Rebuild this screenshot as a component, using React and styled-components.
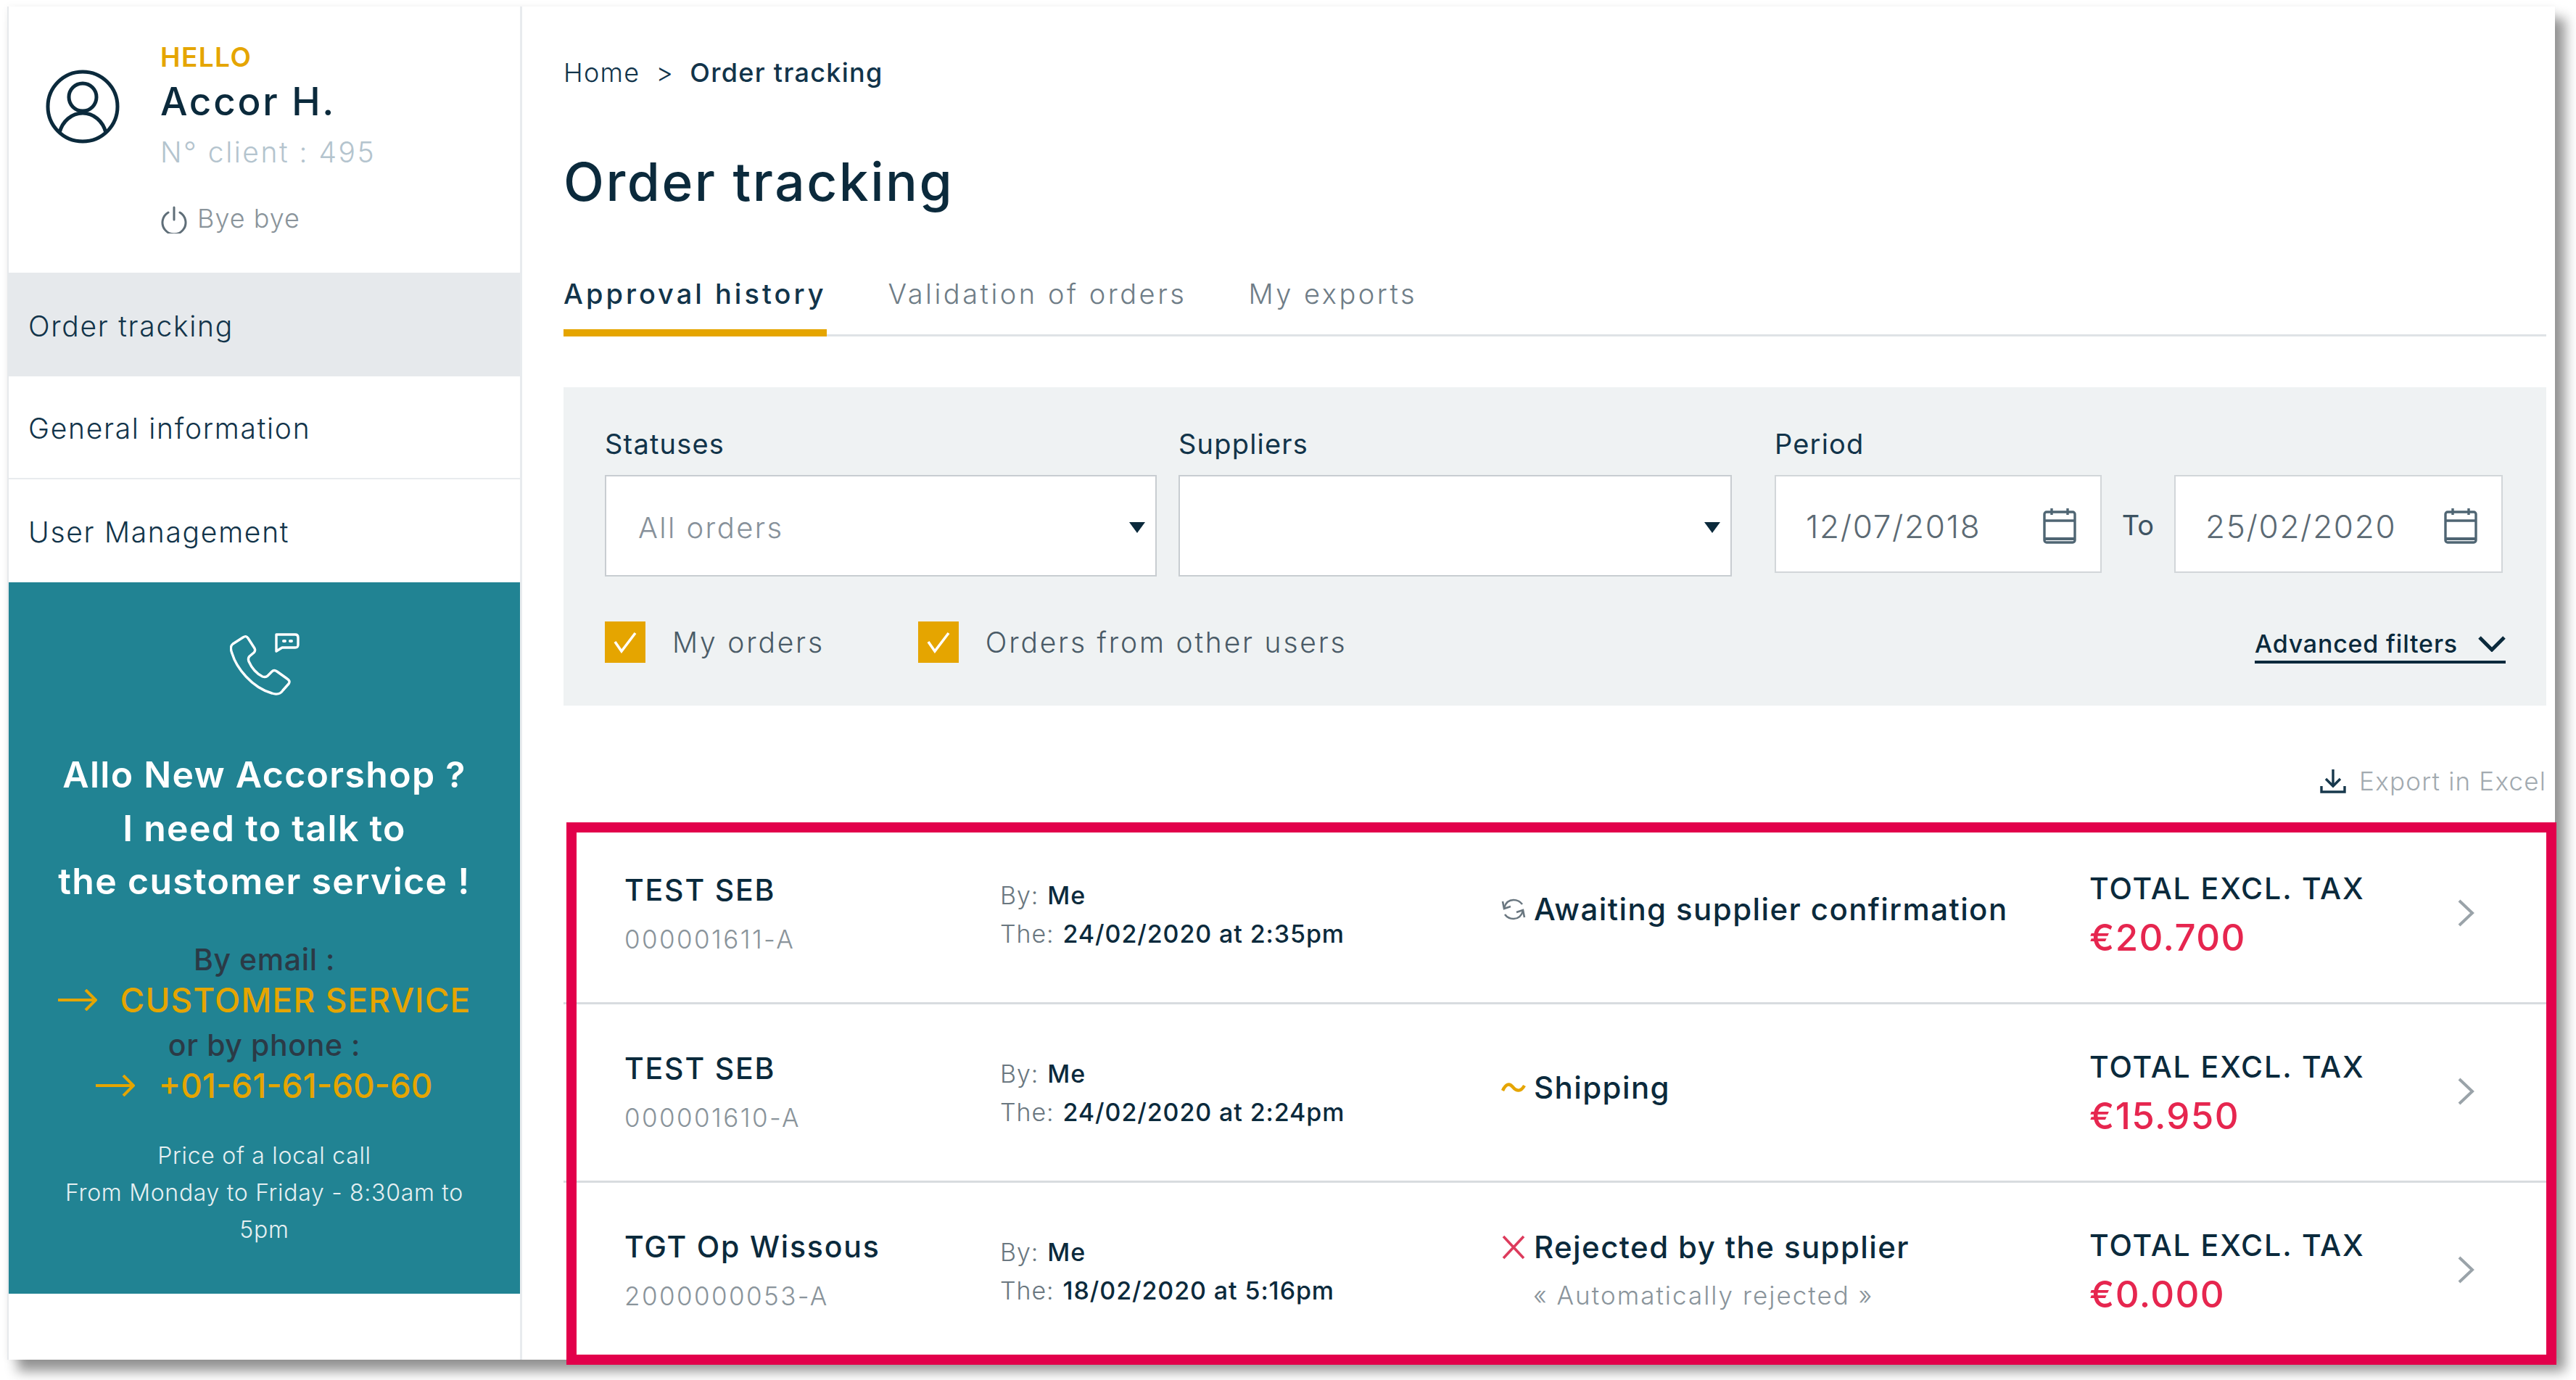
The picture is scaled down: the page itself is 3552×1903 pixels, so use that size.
import styled, { createGlobalStyle } from "styled-components";

const GlobalStyle = createGlobalStyle`
  html, body {
    margin: 0;
    padding: 0;
    background: #ffffff;
  }
  body {
    font-family: "Inter", "Noto Sans", sans-serif;
    color: #0b2a3c;
  }
  * {
    box-sizing: border-box;
  }
`;

const Page = styled.div`
  width: 3552px;
  height: 1903px;
  padding: 9px 0 0 10px;
  overflow: hidden;
`;

const Card = styled.div`
  position: relative;
  width: 3513px;
  height: 1866px;
  display: flex;
  background: #ffffff;
  border-left: 2px solid #e6e9ec;
  box-shadow: 14px 16px 16px rgba(0, 0, 0, 0.42), 0 0 10px rgba(0, 0, 0, 0.05);
`;

const Sidebar = styled.aside`
  width: 708px;
  flex-shrink: 0;
  border-right: 3px solid #e8ebee;
`;

const Profile = styled.div`
  height: 367px;
  display: flex;
  padding: 50px 0 0 51px;
`;

const Avatar = styled.svg`
  width: 102px;
  height: 102px;
  margin-top: 37px;
  flex-shrink: 0;
`;

const ProfileText = styled.div`
  margin-left: 56px;
`;

const Hello = styled.div`
  font-size: 37px;
  line-height: 40px;
  font-weight: 600;
  letter-spacing: 1.4px;
  color: #e5a500;
`;

const UserName = styled.div`
  font-size: 53px;
  line-height: 60px;
  margin-top: 11px;
  font-weight: 500;
  letter-spacing: 2.7px;
`;

const ClientNo = styled.div`
  font-size: 39px;
  line-height: 46px;
  margin-top: 17px;
  font-weight: 300;
  letter-spacing: 2.5px;
  color: #b4c4ce;
`;

const Logout = styled.div`
  display: flex;
  align-items: center;
  gap: 13px;
  margin-top: 46px;
  font-size: 36px;
  line-height: 44px;
  font-weight: 300;
  letter-spacing: 1px;
  color: #8a949b;

  svg {
    margin-top: 4px;
  }
`;

const NavItem = styled.div`
  height: ${(props) => (props.$active ? "143px" : "142px")};
  display: flex;
  align-items: center;
  padding: 3px 0 0 27px;
  font-size: 39px;
  font-weight: 300;
  letter-spacing: 1.7px;
  color: #12344a;
  background: ${(props) => (props.$active ? "#e6e9ec" : "#ffffff")};
  border-bottom: ${(props) => (props.$bordered ? "2px solid #e8ebee" : "none")};
`;

const Contact = styled.div`
  height: 981px;
  background: #218393;
  padding-top: 70px;
  text-align: center;
`;

const ContactIcon = styled.svg`
  display: block;
  width: 96px;
  height: 86px;
  margin: 0 auto;
`;

const ContactTitle = styled.div`
  margin-top: 73px;
  font-size: 50px;
  line-height: 73.5px;
  font-weight: 600;
  letter-spacing: 1.3px;
  color: #ffffff;
`;

const ContactLabel = styled.div`
  font-size: 41px;
  line-height: 56px;
  font-weight: 500;
  letter-spacing: 0.6px;
  color: #2b3a46;
  margin-top: ${(props) => props.$top || 0}px;
`;

const ContactLink = styled.div`
  display: flex;
  align-items: center;
  justify-content: center;
  gap: 32px;
  font-size: 46px;
  line-height: 56px;
  font-weight: 500;
  letter-spacing: ${(props) => props.$spacing || 0}px;
  color: #e5a500;
`;

const ContactNote = styled.div`
  margin-top: 43px;
  font-size: 32px;
  line-height: 51px;
  font-weight: 300;
  letter-spacing: 0.7px;
  color: #e6f0f2;
`;

const Main = styled.main`
  flex: 1;
  padding: 71px 12px 0 57px;
  min-width: 0;
`;

const Crumbs = styled.div`
  display: flex;
  align-items: center;
  height: 40px;
  gap: 22px;
  font-size: 36px;
  font-weight: 300;
  letter-spacing: 1.3px;
  color: #12344a;
`;

const CrumbCurrent = styled.span`
  font-weight: 500;
`;

const Title = styled.h1`
  margin: 86px 0 0 0;
  height: 90px;
  line-height: 90px;
  font-size: 73px;
  font-weight: 500;
  letter-spacing: 2.5px;
  color: #0b2a3c;
`;

const Tabs = styled.div`
  display: flex;
  align-items: flex-start;
  height: 102px;
  margin-top: 66px;
  border-bottom: 3px solid #dfe3e6;
  gap: 85px;
`;

const Tab = styled.div`
  height: 102px;
  padding-top: 21px;
  font-size: 38px;
  line-height: 44px;
  letter-spacing: ${(props) => (props.$active ? 4 : 3.5)}px;
  font-weight: ${(props) => (props.$active ? 500 : 300)};
  color: ${(props) => (props.$active ? "#12344a" : "#6f7d87")};
  border-bottom: ${(props) => (props.$active ? "10px solid #e5a500" : "none")};
`;

const Filters = styled.section`
  height: 439px;
  margin-top: 70px;
  padding: 55px 60px 0 57px;
  background: #eff2f3;
`;

const FilterRow = styled.div`
  display: flex;
  align-items: flex-start;
`;

const Field = styled.div`
  width: ${(props) => props.$width}px;
  margin-right: ${(props) => props.$gap || 0}px;
  flex-shrink: 0;
`;

const FieldLabel = styled.div`
  height: 66px;
  font-size: 38px;
  line-height: 46px;
  font-weight: 400;
  letter-spacing: 1.2px;
  color: #12344a;
`;

const SelectBox = styled.div`
  height: 140px;
  display: flex;
  align-items: center;
  justify-content: space-between;
  padding: 4px 14px 0 44px;
  background: #ffffff;
  border: 2px solid #c8cdd1;
  font-size: 40px;
  font-weight: 300;
  letter-spacing: 2.4px;
  color: #87919a;
`;

const Caret = styled.span`
  width: 0;
  height: 0;
  border-left: 11px solid transparent;
  border-right: 11px solid transparent;
  border-top: 15px solid #0b2a3c;
  margin-left: auto;
`;

const DateGroup = styled.div`
  display: flex;
  align-items: center;
`;

const DateBox = styled.div`
  width: ${(props) => props.$width}px;
  height: 135px;
  display: flex;
  align-items: center;
  justify-content: space-between;
  padding: 4px 33px 0 41px;
  background: #ffffff;
  border: 2px solid #d2d6d9;
  font-size: 44px;
  font-weight: 300;
  letter-spacing: 1.7px;
  color: #5c6a74;
`;

const DateText = styled.span`
  margin-top: 3px;
`;

const ToLabel = styled.div`
  width: 100px;
  text-align: center;
  font-size: 38px;
  font-weight: 400;
  margin-top: 3px;
  color: #3d5362;
`;

const FilterFoot = styled.div`
  display: flex;
  align-items: center;
  margin-top: 62px;
  height: 57px;
`;

const CheckItem = styled.label`
  display: flex;
  align-items: center;
  gap: 37px;
  margin-right: ${(props) => props.$gap || 0}px;
  font-size: 39px;
  font-weight: 300;
  letter-spacing: 2.8px;
  color: #4a5b67;
`;

const CheckBox = styled.span`
  width: 56px;
  height: 57px;
  display: flex;
  align-items: center;
  justify-content: center;
  background: #e5a500;
`;

const AdvancedLink = styled.div`
  display: flex;
  align-items: center;
  justify-content: space-between;
  width: 346px;
  height: 50px;
  margin: 8px 0 0 auto;
  border-bottom: 4px solid #0b2a3c;
  font-size: 34px;
  font-weight: 500;
  letter-spacing: 0.8px;
  color: #0b2a3c;
  position: relative;
  left: 4px;
`;

const ExportRow = styled.div`
  display: flex;
  align-items: center;
  justify-content: flex-end;
  height: 40px;
  margin-top: 84px;
  gap: 18px;
  font-size: 35px;
  font-weight: 300;
  letter-spacing: 1.2px;
  color: #a2aab0;
`;

const OrderList = styled.div`
  margin-top: 42px;
`;

const OrderRow = styled.div`
  display: grid;
  grid-template-columns: 518px 688px 814px 507px 60px;
  align-items: center;
  height: 246px;
  padding: 0 0 4px 84px;
  border-bottom: 3px solid ${(props) => (props.$last ? "transparent" : "#d8dcdf")};
`;

const OrderName = styled.div`
  font-size: 41px;
  line-height: 50px;
  font-weight: 500;
  letter-spacing: 1.8px;
  color: #0b2a3c;
`;

const OrderCode = styled.div`
  margin-top: 22px;
  font-size: 35px;
  line-height: 42px;
  font-weight: 300;
  letter-spacing: 2.4px;
  color: #8a949b;
`;

const MetaBlock = styled.div`
  padding-top: 4px;
`;

const MetaLine = styled.div`
  font-size: 34px;
  line-height: 53px;
  font-weight: 300;
  letter-spacing: 0.9px;
  color: #6a7780;
`;

const MetaValue = styled.span`
  font-weight: 500;
  color: #0b2a3c;
  margin-left: 12px;
`;

const StatusBlock = styled.div`
  margin-top: ${(props) => (props.$hasNote ? 0 : -10)}px;
`;

const StatusLine = styled.div`
  display: flex;
  align-items: center;
  gap: 8px;
  font-size: 42px;
  line-height: 50px;
  font-weight: 500;
  letter-spacing: 1.4px;
  color: #0b2a3c;
`;

const StatusIcon = styled.span`
  width: 40px;
  height: 40px;
  display: flex;
  align-items: center;
  justify-content: center;
`;

const StatusNote = styled.div`
  margin: 20px 0 0 47px;
  font-size: 35px;
  line-height: 42px;
  font-weight: 300;
  letter-spacing: 2px;
  color: #8a949b;
`;

const TotalBlock = styled.div`
  padding-top: 5px;
`;

const TotalLabel = styled.div`
  font-size: 41px;
  line-height: 50px;
  font-weight: 500;
  letter-spacing: 1.9px;
  color: #0b2a3c;
`;

const TotalValue = styled.div`
  margin-top: 14px;
  font-size: 51px;
  line-height: 58px;
  font-weight: 500;
  letter-spacing: 1.4px;
  color: #e6264f;
`;

const RedFrame = styled.div`
  position: absolute;
  left: 769px;
  top: 1125px;
  width: 2744px;
  height: 748px;
  border: 14px solid #e2004b;
  pointer-events: none;
`;

function UserIcon() {
  return (
    <Avatar viewBox="0 0 102 102" fill="none" stroke="#0b2a3c" strokeWidth="5">
      <circle cx="51" cy="51" r="48" />
      <circle cx="51" cy="38" r="19" />
      <path d="M19 87c4-16 17-27 32-27s28 11 32 27" />
    </Avatar>
  );
}

function PowerIcon() {
  return (
    <svg width="38" height="38" viewBox="0 0 38 38" fill="none" stroke="#5f6e78" strokeWidth="3" strokeLinecap="round">
      <path d="M11 9a16 16 0 1 0 16 0" />
      <path d="M19 2v17" />
    </svg>
  );
}

function PhoneChatIcon() {
  return (
    <ContactIcon viewBox="0 0 96 86" fill="none" stroke="#ffffff" strokeWidth="3.4" strokeLinejoin="round" strokeLinecap="round">
      <path d="M18 6 L4 15 C0 18 1 23 3 28 C9 48 30 75 58 83 C64 85 70 84 73 79 L81 70 C83 67 82 65 79 63 L65 53 C62 51 60 51 58 53 L52 59 C50 61 48 61 45 60 C37 56 30 48 26 39 C25 36 25 34 27 32 L33 27 C35 25 35 23 34 21 L25 7 C23 4 21 4 18 6 Z" />
      <path d="M64 2 H90 C93 2 94 4 94 6 V16 C94 19 93 20 90 20 H72 L64 25 Z" />
      <path d="M74 11 h2 M83 11 h2" strokeWidth="4" />
    </ContactIcon>
  );
}

function ArrowIcon() {
  return (
    <svg width="54" height="30" viewBox="0 0 54 30" fill="none" stroke="#e5a500" strokeWidth="4">
      <path d="M0 15H52" />
      <path d="M38 1L52 15L38 29" />
    </svg>
  );
}

function CalendarIcon() {
  return (
    <svg width="46" height="50" viewBox="0 0 46 50" fill="none" stroke="#4f6573" strokeWidth="3.4">
      <rect x="2" y="6" width="42" height="42" rx="3" />
      <path d="M2 18H44" />
      <path d="M12 1V10M34 1V10" />
      <path d="M2 43H44" strokeWidth="4" />
    </svg>
  );
}

function CheckMark() {
  return (
    <svg width="32" height="30" viewBox="0 0 32 30" fill="none" stroke="#ffffff" strokeWidth="3.6">
      <path d="M2 14L11 27L30 2" />
    </svg>
  );
}

function ChevronDown() {
  return (
    <svg width="38" height="22" viewBox="0 0 38 22" fill="none" stroke="#0b2a3c" strokeWidth="5">
      <path d="M2 2L19 19L36 2" />
    </svg>
  );
}

function DownloadIcon() {
  return (
    <svg width="36" height="34" viewBox="0 0 36 34" fill="none" stroke="#17384c" strokeWidth="3.4">
      <path d="M18 1V23" />
      <path d="M8 14L18 24L28 14" />
      <path d="M2 24V32H34V24" />
    </svg>
  );
}

function SyncIcon() {
  return (
    <svg width="34" height="32" viewBox="0 0 34 32" fill="none" stroke="#6a7780" strokeWidth="2.6">
      <path d="M4 14C6 7 11 3 17 3C22 3 26 5 29 9" />
      <path d="M30 18C28 25 23 29 17 29C12 29 8 27 5 23" />
      <path d="M2 5L4 15L13 12" />
      <path d="M32 27L30 17L21 20" />
    </svg>
  );
}

function WaveIcon() {
  return (
    <svg width="34" height="18" viewBox="0 0 34 18" fill="none" stroke="#e5a500" strokeWidth="4.4">
      <path d="M2 13C6 4 11 2 16 8C21 14 27 15 32 6" />
    </svg>
  );
}

function CrossIcon() {
  return (
    <svg width="34" height="34" viewBox="0 0 34 34" fill="none" stroke="#dd3b5c" strokeWidth="3.6">
      <path d="M3 2L31 32M31 2L3 32" />
    </svg>
  );
}

function ChevronRight() {
  return (
    <svg width="24" height="38" viewBox="0 0 24 38" fill="none" stroke="#9aa3a9" strokeWidth="4">
      <path d="M3 2L21 19L3 36" />
    </svg>
  );
}

const orders = [
  { name: "TEST SEB", code: "000001611-A", date: "24/02/2020 at 2:35pm", icon: <SyncIcon />, status: "Awaiting supplier confirmation", total: "€20.700" },
  { name: "TEST SEB", code: "000001610-A", date: "24/02/2020 at 2:24pm", icon: <WaveIcon />, status: "Shipping", total: "€15.950" },
  { name: "TGT Op Wissous", code: "2000000053-A", date: "18/02/2020 at 5:16pm", icon: <CrossIcon />, status: "Rejected by the supplier", note: "« Automatically rejected »", total: "€0.000" },
];

export default function App() {
  return (
    <Page>
      <GlobalStyle />
      <Card>
        <Sidebar>
          <Profile>
            <UserIcon />
            <ProfileText>
              <Hello>HELLO</Hello>
              <UserName>Accor H.</UserName>
              <ClientNo>N° client : 495</ClientNo>
              <Logout>
                <PowerIcon />
                Bye bye
              </Logout>
            </ProfileText>
          </Profile>
          <NavItem $active>Order tracking</NavItem>
          <NavItem $bordered>General information</NavItem>
          <NavItem>User Management</NavItem>
          <Contact>
            <PhoneChatIcon />
            <ContactTitle>
              Allo New Accorshop ?<br />
              I need to talk to<br />
              the customer service !
            </ContactTitle>
            <ContactLabel $top={42}>By email :</ContactLabel>
            <ContactLink $spacing={1.1}>
              <ArrowIcon />
              CUSTOMER SERVICE
            </ContactLink>
            <ContactLabel $top={6}>or by phone :</ContactLabel>
            <ContactLink>
              <ArrowIcon />
              +01-61-61-60-60
            </ContactLink>
            <ContactNote>
              Price of a local call<br />
              From Monday to Friday - 8:30am to<br />
              5pm
            </ContactNote>
          </Contact>
        </Sidebar>
        <Main>
          <Crumbs>
            <span>Home</span>
            <span>&gt;</span>
            <CrumbCurrent>Order tracking</CrumbCurrent>
          </Crumbs>
          <Title>Order tracking</Title>
          <Tabs>
            <Tab $active>Approval history</Tab>
            <Tab>Validation of orders</Tab>
            <Tab>My exports</Tab>
          </Tabs>
          <Filters>
            <FilterRow>
              <Field $width={761} $gap={30}>
                <FieldLabel>Statuses</FieldLabel>
                <SelectBox>
                  All orders
                  <Caret />
                </SelectBox>
              </Field>
              <Field $width={763} $gap={59}>
                <FieldLabel>Suppliers</FieldLabel>
                <SelectBox>
                  <Caret />
                </SelectBox>
              </Field>
              <Field $width={1004}>
                <FieldLabel>Period</FieldLabel>
                <DateGroup>
                  <DateBox $width={451}>
                    <DateText>12/07/2018</DateText>
                    <CalendarIcon />
                  </DateBox>
                  <ToLabel>To</ToLabel>
                  <DateBox $width={453}>
                    <DateText>25/02/2020</DateText>
                    <CalendarIcon />
                  </DateBox>
                </DateGroup>
              </Field>
            </FilterRow>
            <FilterFoot>
              <CheckItem $gap={129}>
                <CheckBox>
                  <CheckMark />
                </CheckBox>
                My orders
              </CheckItem>
              <CheckItem>
                <CheckBox>
                  <CheckMark />
                </CheckBox>
                Orders from other users
              </CheckItem>
              <AdvancedLink>
                Advanced filters
                <ChevronDown />
              </AdvancedLink>
            </FilterFoot>
          </Filters>
          <ExportRow>
            <DownloadIcon />
            Export in Excel
          </ExportRow>
          <OrderList>
            {orders.map((order, index) => (
              <OrderRow key={index} $last={index === orders.length - 1}>
                <div>
                  <OrderName>{order.name}</OrderName>
                  <OrderCode>{order.code}</OrderCode>
                </div>
                <MetaBlock>
                  <MetaLine>
                    By:<MetaValue>Me</MetaValue>
                  </MetaLine>
                  <MetaLine>
                    The:<MetaValue>{order.date}</MetaValue>
                  </MetaLine>
                </MetaBlock>
                <StatusBlock $hasNote={Boolean(order.note)}>
                  <StatusLine>
                    <StatusIcon>{order.icon}</StatusIcon>
                    {order.status}
                  </StatusLine>
                  {order.note && <StatusNote>{order.note}</StatusNote>}
                </StatusBlock>
                <TotalBlock>
                  <TotalLabel>TOTAL EXCL. TAX</TotalLabel>
                  <TotalValue>{order.total}</TotalValue>
                </TotalBlock>
                <ChevronRight />
              </OrderRow>
            ))}
          </OrderList>
        </Main>
        <RedFrame />
      </Card>
    </Page>
  );
}
